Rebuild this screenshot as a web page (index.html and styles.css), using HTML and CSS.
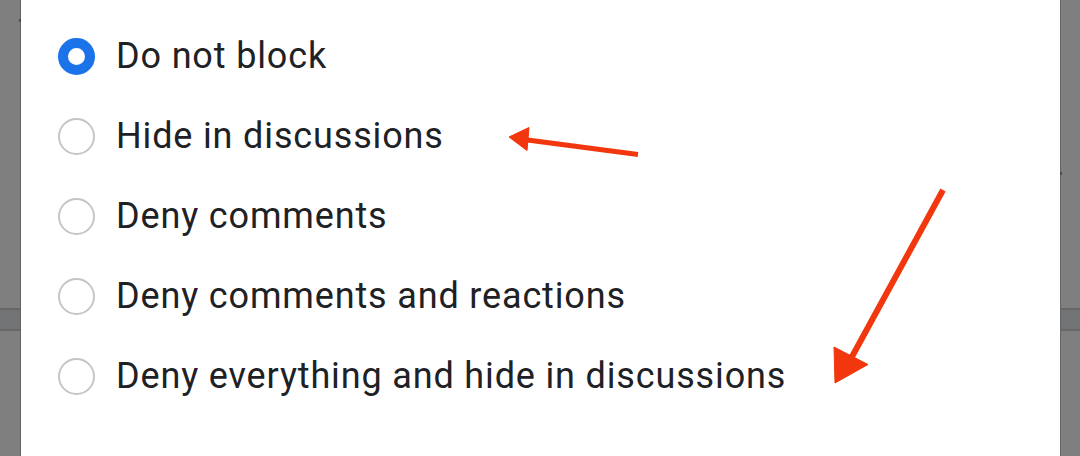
FILE: index.html
```html
<!DOCTYPE html>
<html lang="en">
<head>
<meta charset="utf-8">
<title>Block options</title>
<link rel="stylesheet" href="styles.css">
</head>
<body>
<div class="screen">
  <div class="backdrop backdrop-left">
    <div class="tick tick-left"></div>
    <div class="strip"></div>
  </div>
  <div class="dialog">
    <ul class="options">
      <li class="option">
        <span class="radio radio-checked"></span>
        <span class="label">Do not block</span>
      </li>
      <li class="option">
        <span class="radio"></span>
        <span class="label">Hide in discussions</span>
      </li>
      <li class="option">
        <span class="radio"></span>
        <span class="label">Deny comments</span>
      </li>
      <li class="option">
        <span class="radio"></span>
        <span class="label">Deny comments and reactions</span>
      </li>
      <li class="option">
        <span class="radio"></span>
        <span class="label">Deny everything and hide in discussions</span>
      </li>
    </ul>
    <svg class="marks" width="1080" height="456" viewBox="0 0 1080 456">
      <g fill="#f2360e" stroke="#f2360e" stroke-linejoin="round">
        <line x1="638" y1="154.5" x2="520" y2="139" stroke-width="5"/>
        <polygon points="509,137 529,127.5 527,150.5" stroke-width="1"/>
        <line x1="943" y1="190" x2="848" y2="364" stroke-width="6"/>
        <polygon points="835,383 834,347 868,364.5" stroke-width="1"/>
      </g>
    </svg>
  </div>
  <div class="backdrop backdrop-right">
    <div class="tick tick-right"></div>
    <div class="strip"></div>
  </div>
</div>
</body>
</html>
```
FILE: styles.css
```css
* {
  box-sizing: border-box;
}

html, body {
  margin: 0;
  padding: 0;
}

body {
  width: 1080px;
  height: 456px;
  overflow: hidden;
  background: #7f7f7f;
  font-family: Roboto, "Noto Sans", "Liberation Sans", sans-serif;
}

.screen {
  display: flex;
  height: 456px;
}

/* dimmed page visible on both sides of the sheet */
.backdrop {
  position: relative;
  width: 20px;
  flex: none;
  display: flex;
  flex-direction: column;
  padding-top: 308px;
}

.backdrop-left {
  border-right: 1px solid #636363;
  width: 21px;
}

.backdrop-right {
  border-left: 1px solid #636363;
  width: 20px;
}

.strip {
  height: 23px;
  background: #727374;
  border-top: 2px solid #676767;
  border-bottom: 2px solid #676767;
}

.tick {
  position: absolute;
  width: 2px;
  height: 3px;
  background: #4a4a4a;
}

.tick-left {
  right: -1px;
  top: 19px;
}

.tick-right {
  left: -1px;
  top: 172px;
}

.dialog {
  flex: 1;
  background: #ffffff;
  position: relative;
}

.options {
  list-style: none;
  margin: 0;
  padding: 16px 0 0 37px;
}

.option {
  height: 80px;
  display: flex;
  align-items: center;
  gap: 21px;
}

.radio {
  width: 37px;
  height: 37px;
  flex: none;
  border-radius: 50%;
  border: 2px solid #c6c6c6;
}

.radio-checked {
  border: 10px solid #1a73e8;
  background: #ffffff;
}

.label {
  font-size: 36px;
  color: #202124;
  letter-spacing: 0.85px;
  line-height: 40px;
}

.marks {
  position: absolute;
  left: -21px;
  top: 0;
  pointer-events: none;
}
```
